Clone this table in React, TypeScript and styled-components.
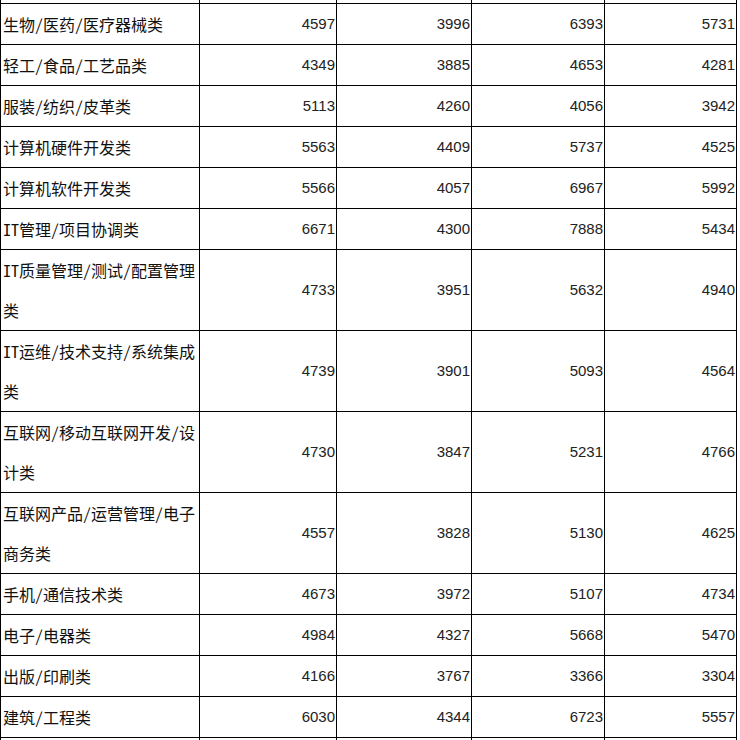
import React from "react";
import styled, { createGlobalStyle } from "styled-components";

const GlobalStyle = createGlobalStyle`
  html, body {
    margin: 0;
    padding: 0;
    background: #ffffff;
  }
  body {
    font-family: "Noto Sans Mono CJK SC", "Noto Sans CJK SC", monospace;
    color: #000000;
  }
`;

const Page = styled.div`
  width: 740px;
  height: 740px;
  overflow: hidden;
  background: #ffffff;
`;

const Table = styled.table`
  width: 737px;
  table-layout: fixed;
  border-collapse: collapse;
  border-spacing: 0;
`;

const Col = styled.col<{ $w: number }>`
  width: ${(p) => p.$w}px;
`;

const EdgeRow = styled.tr<{ $h: number; $top?: boolean }>`
  td {
    height: ${(p) => p.$h}px;
    padding: 0;
    border-left: 1px solid #000;
    border-right: 1px solid #000;
    ${(p) => (p.$top ? "border-top: none;" : "border-bottom: none;")}
    line-height: 0;
    font-size: 0;
  }
`;

const Row = styled.tr``;

const NameCell = styled.td`
  border: 1px solid #000;
  padding: 0 0 0 2px;
  font-family: "Noto Sans Mono CJK SC", "Noto Sans CJK SC", monospace;
  font-size: 16px;
  line-height: 40px;
  text-align: left;
  vertical-align: middle;
  white-space: pre-line;
  color: #111;
`;

const NumCell = styled.td`
  border: 1px solid #000;
  padding: 0 1px 0 0;
  font-family: "Liberation Sans", sans-serif;
  font-size: 15px;
  line-height: 40px;
  text-align: right;
  vertical-align: middle;
  color: #222;
`;

const rows: [string, number, number, number, number][] = [
  ["生物/医药/医疗器械类", 4597, 3996, 6393, 5731],
  ["轻工/食品/工艺品类", 4349, 3885, 4653, 4281],
  ["服装/纺织/皮革类", 5113, 4260, 4056, 3942],
  ["计算机硬件开发类", 5563, 4409, 5737, 4525],
  ["计算机软件开发类", 5566, 4057, 6967, 5992],
  ["IT管理/项目协调类", 6671, 4300, 7888, 5434],
  ["IT质量管理/测试/配置管理\n类", 4733, 3951, 5632, 4940],
  ["IT运维/技术支持/系统集成\n类", 4739, 3901, 5093, 4564],
  ["互联网/移动互联网开发/设\n计类", 4730, 3847, 5231, 4766],
  ["互联网产品/运营管理/电子\n商务类", 4557, 3828, 5130, 4625],
  ["手机/通信技术类", 4673, 3972, 5107, 4734],
  ["电子/电器类", 4984, 4327, 5668, 5470],
  ["出版/印刷类", 4166, 3767, 3366, 3304],
  ["建筑/工程类", 6030, 4344, 6723, 5557],
];

const widths = [199, 137, 135, 133, 132];

export default function App() {
  return (
    <>
      <GlobalStyle />
      <Page>
        <Table>
          <colgroup>
            {widths.map((w, i) => (
              <Col key={i} $w={w} />
            ))}
          </colgroup>
          <tbody>
            <EdgeRow $h={3} $top>
              {widths.map((_, i) => (
                <td key={i} />
              ))}
            </EdgeRow>
            {rows.map(([name, a, b, c, d]) => (
              <Row key={name}>
                <NameCell>{name}</NameCell>
                <NumCell>{a}</NumCell>
                <NumCell>{b}</NumCell>
                <NumCell>{c}</NumCell>
                <NumCell>{d}</NumCell>
              </Row>
            ))}
            <EdgeRow $h={3}>
              {widths.map((_, i) => (
                <td key={i} />
              ))}
            </EdgeRow>
          </tbody>
        </Table>
      </Page>
    </>
  );
}
